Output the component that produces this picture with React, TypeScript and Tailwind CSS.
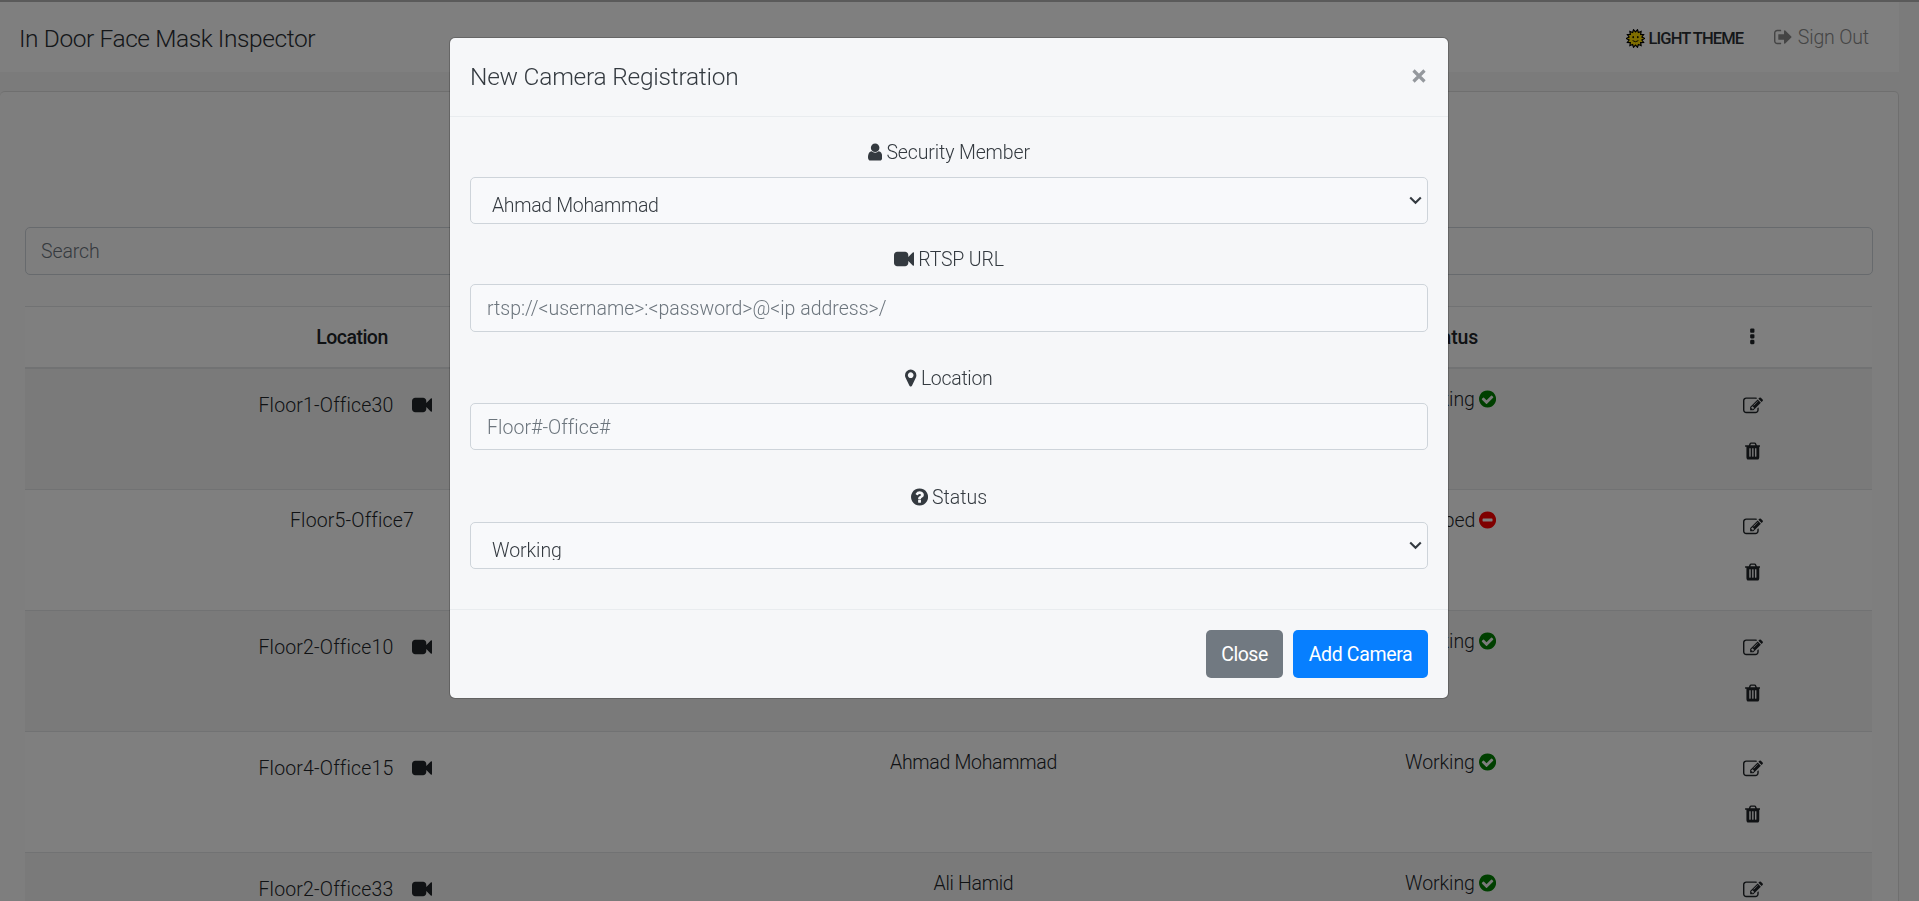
import type { ReactNode } from "react";

type IconProps = { box: string; className: string; d: string };

function Icon({ box, className, d }: IconProps) {
  return (
    <svg viewBox={box} className={`h-5 shrink-0 ${className}`} fill="currentColor" aria-hidden="true">
      <path d={d} />
    </svg>
  );
}

const DISC =
  "q0 209-103 385.5t-279.5 279.5-385.5 103-385.5-103-279.5-279.5-103-385.5 103-385.5 279.5-279.5 385.5-103 385.5 103 279.5 279.5 103 385.5z";
const SLOT = "v-704q0-14-9-23t-23-9h-64q-14 0-23 9t-9 23v704q0 14 9 23t23 9h64q14 0 23-9t9-23z";
const DOT = "v192q0 40-28 68t-68 28h-192q-40 0-68-28t-28-68v-192q0-40 28-68t68-28h192q40 0 68 28t28 68z";

const VideoIcon = () => (
  <Icon
    box="0 0 1792 1792"
    className="w-5"
    d="M1792 352v1088q0 42-39 59-13 5-25 5-27 0-45-19l-403-403v166q0 119-84.5 203.5t-203.5 84.5h-704q-119 0-203.5-84.5t-84.5-203.5v-704q0-119 84.5-203.5t203.5-84.5h704q119 0 203.5 84.5t84.5 203.5v165l403-402q18-19 45-19 12 0 25 5 39 17 39 59z"
  />
);

const UserIcon = () => (
  <Icon
    box="256 0 1280 1792"
    className="w-[14.3px]"
    d="M1536 1399q0 109-62.5 187t-150.5 78h-854q-88 0-150.5-78t-62.5-187q0-85 8.5-160.5t31.5-152 58.5-131 94-89 134.5-34.5q131 128 313 128t313-128q76 0 134.5 34.5t94 89 58.5 131 31.5 152 8.5 160.5zm-256-887q0 159-112.5 271.5t-271.5 112.5-271.5-112.5-112.5-271.5 112.5-271.5 271.5-112.5 271.5 112.5 112.5 271.5z"
  />
);

const MarkerIcon = () => (
  <Icon
    box="384 0 1024 1792"
    className="w-[11.4px]"
    d="M1152 640q0-106-75-181t-181-75-181 75-75 181 75 181 181 75 181-75 75-181zm256 0q0 109-33 179l-364 774q-16 33-47.5 52t-67.5 19-67.5-19-46.5-52l-365-774q-33-70-33-179 0-212 150-362t362-150 362 150 150 362z"
  />
);

const QuestionIcon = () => (
  <Icon
    box="128 0 1536 1792"
    className="w-[17.1px]"
    d={
      "M1024 1376v-192q0-14-9-23t-23-9h-192q-14 0-23 9t-9 23v192q0 14 9 23t23 9h192q14 0 23-9t9-23zm256-672q0-88-55.5-163t-138.5-116-170-41q-243 0-371 213-15 24 8 42l132 100q7 6 19 6 16 0 25-12 53-68 86-92 34-24 86-24 48 0 85.5 26t37.5 59q0 38-20 61t-68 45q-63 28-115.5 86.5t-52.5 125.5v36q0 14 9 23t23 9h192q14 0 23-9t9-23q0-19 21.5-49.5t54.5-49.5q32-18 49-28.5t46-35 44.5-48 28-60.5 12.5-81zm384 192" +
      DISC
    }
  />
);

const CheckIcon = () => (
  <Icon
    box="128 0 1536 1792"
    className="w-[17.1px] text-[#008000]"
    d={
      "M1412 734q0-28-18-46l-91-90q-19-19-45-19t-45 19l-408 407-226-226q-19-19-45-19t-45 19l-91 90q-18 18-18 46 0 27 18 45l362 362q19 19 45 19 27 0 46-19l543-543q18-18 18-45zm252 162" +
      DISC
    }
  />
);

const MinusIcon = () => (
  <Icon
    box="128 0 1536 1792"
    className="w-[17.1px] text-[#ff0000]"
    d={"M1344 960v-128q0-26-19-45t-45-19h-768q-26 0-45 19t-19 45v128q0 26 19 45t45 19h768q26 0 45-19t19-45zm320-64" + DISC}
  />
);

const TrashIcon = () => (
  <Icon
    box="192 0 1408 1792"
    className="w-[15.7px]"
    d={
      "M704 1376" + SLOT + "M960 1376" + SLOT + "M1216 1376" + SLOT +
      "M672 384h448l-48-117q-7-9-17-11h-317q-10 2-17 11zm928 32v64q0 14-9 23t-23 9h-96v948q0 83-47 143.5t-113 60.5h-832q-66 0-113-58.5t-47-141.5v-952h-96q-14 0-23-9t-9-23v-64q0-14 9-23t23-9h309l70-167q15-37 54-63t79-26h320q40 0 79 26t54 63l70 167h309q14 0 23 9t9 23z"
    }
  />
);

const EditIcon = () => (
  <Icon
    box="0 0 1792 1792"
    className="w-5"
    d="M888 1184l116-116-152-152-116 116v56h96v96h56zm440-720q-16-16-33 1l-350 350q-17 17-1 33t33-1l350-350q17-17 1-33zm80 594v190q0 119-84.5 203.5t-203.5 84.5h-832q-119 0-203.5-84.5t-84.5-203.5v-832q0-119 84.5-203.5t203.5-84.5h832q63 0 117 25 15 7 18 23 3 17-9 29l-49 49q-14 14-32 8-23-6-45-6h-832q-66 0-113 47t-47 113v832q0 66 47 113t113 47h832q66 0 113-47t47-113v-126q0-13 9-22l64-64q15-15 35-7t20 29zm-96-738l288 288-672 672h-288v-288zm444 132l-92 92-288-288 92-92q28-28 68-28t68 28l152 152q28 28 28 68t-28 68z"
  />
);

const EllipsisIcon = () => (
  <Icon
    box="704 0 384 1792"
    className="w-[4.6px]"
    d={"M1088 1248" + DOT + "M1088 736" + DOT + "M1088 224" + DOT}
  />
);

const SignOutIcon = () => (
  <Icon
    box="64 0 1664 1792"
    className="w-[18.6px]"
    d="M704 1440q0 4 1 20t.5 26.5-3 23.5-10 19.5-20.5 6.5h-320q-119 0-203.5-84.5t-84.5-203.5v-704q0-119 84.5-203.5t203.5-84.5h320q13 0 22.5 9.5t9.5 22.5q0 4 1 20t.5 26.5-3 23.5-10 19.5-20.5 6.5h-320q-66 0-113 47t-47 113v704q0 66 47 113t113 47h312l11.5 1 11.5 3 8 5.5 7 9 2 13.5zm928-544q0 26-19 45l-544 544q-19 19-45 19t-45-19-19-45v-288h-448q-26 0-45-19t-19-45v-384q0-26 19-45t45-19h448v-288q0-26 19-45t45-19 45 19l544 544q19 19 19 45z"
  />
);

function sunPoints() {
  const pts: string[] = [];
  for (let i = 0; i < 28; i++) {
    const r = i % 2 ? 6.6 : 9;
    const a = (i * Math.PI) / 14;
    pts.push(`${(9.5 + r * Math.cos(a)).toFixed(2)},${(9.5 + r * Math.sin(a)).toFixed(2)}`);
  }
  return pts.join(" ");
}

const SunIcon = () => (
  <svg viewBox="0 0 19 19" className="mt-[27px] h-[19px] w-[19px]" aria-hidden="true">
    <polygon points={sunPoints()} fill="#ffdc00" stroke="#000" strokeWidth="1.2" />
    <ellipse cx="7.2" cy="8.2" rx="0.8" ry="1.1" fill="#000" />
    <ellipse cx="11.8" cy="8.2" rx="0.8" ry="1.1" fill="#000" />
    <path d="M6.6 11.6q2.9 2.3 5.8 0" fill="none" stroke="#000" strokeWidth="0.9" />
  </svg>
);

type Camera = { location: string; live: boolean; member: string; status: "Working" | "Stopped" };

const cameras: Camera[] = [
  { location: "Floor1-Office30", live: true, member: "", status: "Working" },
  { location: "Floor5-Office7", live: false, member: "", status: "Stopped" },
  { location: "Floor2-Office10", live: true, member: "", status: "Working" },
  { location: "Floor4-Office15", live: true, member: "Ahmad Mohammad", status: "Working" },
  { location: "Floor2-Office33", live: true, member: "Ali Hamid", status: "Working" },
];

const COLS = "grid grid-cols-[654px_589px_365px_239px]";
const LINE = "flex items-start [&>svg]:mt-1";

function CameraRow({ camera, index }: { camera: Camera; index: number }) {
  return (
    <div className={`${COLS} h-[121px] shrink-0 border-b border-[#e2e4e6] ${index % 2 ? "bg-white" : "bg-[#f5f5f5]"}`}>
      <div
        className={`${LINE} justify-center gap-[18px] self-start tracking-[0.17px] ${
          camera.live ? "pt-[22px] pr-[14px]" : "pt-4"
        }`}
      >
        <span>{camera.location}</span>
        {camera.live && <VideoIcon />}
      </div>
      <div className="pt-4 text-center tracking-[-0.29px]">{camera.member}</div>
      <div className={`${LINE} justify-center gap-1 self-start pt-4 tracking-[-0.04px]`}>
        <span>{camera.status}</span>
        {camera.status === "Working" ? <CheckIcon /> : <MinusIcon />}
      </div>
      <div className="flex flex-col items-center gap-[25px] pt-[27px]">
        <EditIcon />
        <TrashIcon />
      </div>
    </div>
  );
}

function Label({ icon, children, className }: { icon: ReactNode; children: ReactNode; className: string }) {
  return (
    <div className={`${LINE} mb-[10px] h-[30px] justify-center gap-1 pt-px ${className}`}>
      {icon}
      <span>{children}</span>
    </div>
  );
}

function SelectBox({ value, className }: { value: string; className: string }) {
  return (
    <div
      role="combobox"
      aria-expanded="false"
      className="flex h-[47px] justify-between rounded-[5px] border border-[#ced4da] bg-[#f8f9fb] pr-[5px] pl-[21px]"
    >
      <span className={`h-[37px] overflow-hidden pt-[13px] ${className}`}>{value}</span>
      <svg viewBox="0 0 13 9" className="mt-[18px] h-[9px] w-[13px]" fill="none" stroke="#343a40" strokeWidth="2.1">
        <path d="M1.2 1.4 6.5 6.7 11.8 1.4" />
      </svg>
    </div>
  );
}

const INPUT = "block rounded-[5px] border border-[#ced4da] px-4 placeholder:text-[#6c757d] placeholder:opacity-100";

export default function App() {
  return (
    <div className="h-[901px] w-full overflow-hidden bg-[#f6f6f6] font-['Roboto',sans-serif] text-[19.5px] leading-[30px] font-light text-[#212529]">
      <div className="flex h-full flex-col border-t-2 border-[#b4b4b4]">
        <header className="flex h-[70px] w-[1899px] shrink-0 items-start bg-[#fefefe] pr-[30px] pl-[19px] text-[#2a2e33]">
          <h1 className="pt-[18px] text-[24.5px] leading-[38px] tracking-[-0.41px]">In Door Face Mask Inspector</h1>
          <div className="ml-auto flex items-start gap-[4px]">
            <SunIcon />
            <span className="pt-[22px] text-[16.5px] font-medium tracking-[-0.9px]">LIGHT THEME</span>
          </div>
          <a className={`${LINE} ml-[31px] gap-[5px] pt-[21px] tracking-[-0.15px] text-[#8a8a8a]`}>
            <SignOutIcon />
            <span>Sign Out</span>
          </a>
        </header>

        <main className="mt-[19px] flex h-[900px] w-[1899px] shrink-0 flex-col rounded-[5px] border border-l-0 border-[#dfdfdf] bg-[#fcfcfc] pt-[135px] pr-6 pl-[25px]">
          <input
            placeholder="Search"
            className={`${INPUT} h-[48px] w-[1848px] shrink-0 bg-transparent pl-[15px] tracking-[-0.1px]`}
          />
          <div className="mt-[31px] w-[1847px] border-t border-[#e2e4e6]">
            <div className={`${COLS} h-[62px] border-b-2 border-[#e2e4e6] bg-white pt-4 font-medium`}>
              <div className="text-center tracking-[-0.52px]">Location</div>
              <div />
              <div className="text-center tracking-[-0.1px]">Status</div>
              <div className="flex justify-center pt-1">
                <EllipsisIcon />
              </div>
            </div>
            {cameras.map((camera, i) => (
              <CameraRow key={camera.location} camera={camera} index={i} />
            ))}
          </div>
        </main>
      </div>

      <div className="fixed inset-0 flex items-start justify-center bg-black/50 pt-[37px] pr-[21px]">
        <div
          role="dialog"
          className="w-[1000px] rounded-[6px] border border-black/20 bg-[#f6f7f9] bg-clip-padding text-[#343a40]"
        >
          <div className="flex h-[79px] items-start justify-between border-b border-[#e9ecef] pt-5 pr-[22px] pl-5">
            <h2 className="text-[24.5px] leading-[38px] tracking-[-0.24px]">New Camera Registration</h2>
            <button aria-label="Close" className="pt-[11px] text-[#94989d]">
              <svg viewBox="0 0 14 14" className="h-[14px] w-[14px]" fill="none" stroke="currentColor" strokeWidth="3.2">
                <path d="M1.5 1.5 12.5 12.5M12.5 1.5 1.5 12.5" />
              </svg>
            </button>
          </div>

          <div className="h-[492px] px-5 pt-5">
            <Label icon={<UserIcon />} className="tracking-[-0.13px]">
              Security Member
            </Label>
            <SelectBox value="Ahmad Mohammad" className="tracking-[-0.32px]" />
            <Label icon={<VideoIcon />} className="mt-5 tracking-[-0.17px]">
              RTSP URL
            </Label>
            <input
              placeholder="rtsp://<username>:<password>@<ip address>/"
              className={`${INPUT} h-[48px] w-full bg-[#f8f9fb]`}
            />
            <Label icon={<MarkerIcon />} className="mt-[31px] tracking-[-0.3px]">
              Location
            </Label>
            <input
              placeholder="Floor#-Office#"
              className={`${INPUT} h-[47px] w-full bg-[#f8f9fb] pt-px tracking-[0.05px]`}
            />
            <Label icon={<QuestionIcon />} className="mt-8">
              Status
            </Label>
            <SelectBox value="Working" className="tracking-[-0.05px]" />
          </div>

          <div className="flex h-[89px] justify-end gap-[10px] border-t border-[#e9ecef] p-5 font-normal text-white">
            <button className="h-[48px] w-[77px] rounded-[5px] bg-[#717981] pt-0.5 tracking-[-0.5px]">Close</button>
            <button className="h-[48px] w-[135px] rounded-[5px] bg-[#077fff] pt-0.5 tracking-[-0.36px]">Add Camera</button>
          </div>
        </div>
      </div>
    </div>
  );
}
